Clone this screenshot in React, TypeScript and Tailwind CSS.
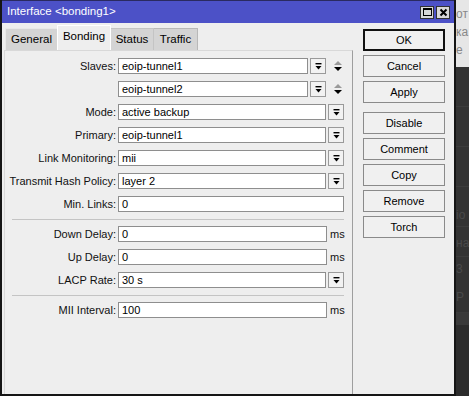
import React from "react";

const font = { fontFamily: '"Liberation Sans", Arial, sans-serif' };

function DropIcon() {
  return (
    <svg width="9" height="9" viewBox="0 0 9 9">
      <rect x="1.5" y="1" width="6" height="1.4" fill="#000" />
      <polygon points="1.5,4 7.5,4 4.5,7.5" fill="#000" />
    </svg>
  );
}

function DropBtn() {
  return (
    <div className="w-[16px] h-[16px] border border-[#9a9a9a] bg-[#f2f2f2] flex items-center justify-center shrink-0">
      <DropIcon />
    </div>
  );
}

function UpDown() {
  return (
    <svg width="10" height="12" viewBox="0 0 10 12" className="shrink-0">
      <polygon points="1,5 9,5 5,1" fill="#9a9a9a" />
      <polygon points="1,7 9,7 5,11" fill="#000" />
    </svg>
  );
}

function Input({ value, w }: { value: string; w: string }) {
  return (
    <div
      className={`${w} h-[16px] border border-[#8e8e8e] bg-white text-[11px] leading-[14px] pl-[3px] text-black whitespace-nowrap overflow-hidden shrink-0`}
    >
      {value}
    </div>
  );
}

function Row({ label, children }: { label: string; children: React.ReactNode }) {
  return (
    <div className="flex items-center h-[16px] mb-[7px]">
      <div className="w-[111px] text-right text-[11px] text-[#111] whitespace-nowrap">{label}</div>
      <div className="flex items-center ml-[2px]">{children}</div>
    </div>
  );
}

function Btn({ label, primary, extra }: { label: string; primary?: boolean; extra?: string }) {
  return (
    <div
      className={`w-[82px] h-[22px] flex items-center justify-center bg-[#f0f0f0] text-[11px] text-black ${
        primary ? "border-[2px] border-[#111]" : "border border-[#8a8a8a]"
      } ${extra ?? ""}`}
    >
      {label}
    </div>
  );
}

export default function App() {
  return (
    <div className="w-[469px] h-[396px] flex overflow-hidden bg-[#2f2f2f]" style={font}>
      {/* Window */}
      <div className="w-[456px] h-[396px] flex flex-col border-l-2 border-r-2 border-b-2 border-[#151515] bg-[#eeeeee] shrink-0">
        {/* Title bar */}
        <div className="h-[23px] bg-[#4c51c7] border-t border-[#2a2a60] flex items-center justify-between pl-[5px] pr-[4px] shrink-0">
          <span className="text-white text-[11.5px]">Interface &lt;bonding1&gt;</span>
          <div className="flex gap-[2px]">
            <div className="w-[14px] h-[13px] bg-[#d8d8d8] border border-[#333] flex items-center justify-center">
              <div className="w-[9px] h-[8px] border border-black border-t-2"></div>
            </div>
            <div className="w-[14px] h-[13px] bg-[#d8d8d8] border border-[#333] flex items-center justify-center">
              <svg width="9" height="9" viewBox="0 0 9 9">
                <path d="M1.5 1.5 L7.5 7.5 M7.5 1.5 L1.5 7.5" stroke="#000" strokeWidth="2" />
              </svg>
            </div>
          </div>
        </div>
        {/* Body */}
        <div className="flex flex-1 min-h-0">
          {/* Left column */}
          <div className="w-[351px] flex flex-col shrink-0">
            {/* Tabs */}
            <div className="h-[27px] flex items-end pl-[3px] shrink-0">
              <div className="w-[52px] h-[22px] bg-[#d4d4d4] border-l border-t border-[#e8e8e8] flex items-center justify-center text-[11.5px] text-black">
                General
              </div>
              <div className="w-[54px] h-[25px] bg-[#eeeeee] border-l border-t border-r border-[#ffffff] flex items-center justify-center text-[11.5px] text-black pb-[3px]">
                Bonding
              </div>
              <div className="w-[43px] h-[22px] bg-[#d4d4d4] border-t border-r border-[#c4c4c4] flex items-center justify-center text-[11.5px] text-black">
                Status
              </div>
              <div className="w-[44px] h-[22px] bg-[#d4d4d4] border-t border-r border-[#b8b8b8] flex items-center justify-center text-[11.5px] text-black">
                Traffic
              </div>
            </div>
            {/* Panel */}
            <div className="ml-[2px] flex-1 border-l border-t border-[#d8d8d8] border-r-[#9e9e9e] border-r pt-[7px]">
              <Row label="Slaves:">
                <Input value="eoip-tunnel1" w="w-[190px]" />
                <div className="ml-[2px]"><DropBtn /></div>
                <div className="ml-[7px]"><UpDown /></div>
              </Row>
              <Row label="">
                <Input value="eoip-tunnel2" w="w-[190px]" />
                <div className="ml-[2px]"><DropBtn /></div>
                <div className="ml-[7px]"><UpDown /></div>
              </Row>
              <Row label="Mode:">
                <Input value="active backup" w="w-[208px]" />
                <div className="ml-[2px]"><DropBtn /></div>
              </Row>
              <Row label="Primary:">
                <Input value="eoip-tunnel1" w="w-[208px]" />
                <div className="ml-[2px]"><DropBtn /></div>
              </Row>
              <Row label="Link Monitoring:">
                <Input value="mii" w="w-[208px]" />
                <div className="ml-[2px]"><DropBtn /></div>
              </Row>
              <Row label="Transmit Hash Policy:">
                <Input value="layer 2" w="w-[208px]" />
                <div className="ml-[2px]"><DropBtn /></div>
              </Row>
              <Row label="Min. Links:">
                <Input value="0" w="w-[226px]" />
              </Row>
              <div className="ml-[7px] w-[332px] h-[1px] bg-[#c4c4c4] mt-[7px] mb-[6px]"></div>
              <Row label="Down Delay:">
                <Input value="0" w="w-[209px]" />
                <span className="ml-[3px] text-[11px] text-[#111]">ms</span>
              </Row>
              <Row label="Up Delay:">
                <Input value="0" w="w-[209px]" />
                <span className="ml-[3px] text-[11px] text-[#111]">ms</span>
              </Row>
              <Row label="LACP Rate:">
                <Input value="30 s" w="w-[208px]" />
                <div className="ml-[2px]"><DropBtn /></div>
              </Row>
              <div className="ml-[7px] w-[332px] h-[1px] bg-[#c4c4c4] mt-[1px] mb-[6px]"></div>
              <Row label="MII Interval:">
                <Input value="100" w="w-[209px]" />
                <span className="ml-[3px] text-[11px] text-[#111]">ms</span>
              </Row>
            </div>
          </div>
          {/* Buttons */}
          <div className="flex flex-col gap-[4px] pl-[10px] pt-[6px]">
            <Btn label="OK" primary />
            <Btn label="Cancel" />
            <Btn label="Apply" />
            <Btn label="Disable" extra="mt-[5px]" />
            <Btn label="Comment" />
            <Btn label="Copy" />
            <Btn label="Remove" />
            <Btn label="Torch" />
          </div>
        </div>
      </div>
      {/* Background window strip */}
      <div className="flex-1 flex flex-col overflow-hidden text-[12px] leading-[16px] whitespace-nowrap">
        <div className="h-[67px] bg-[#e6e6e6] text-[#888] pt-[6px] flex flex-col gap-[2px]">
          <span>от</span>
          <span>ка</span>
          <span>е</span>
        </div>
        <div className="flex-1 bg-[#333333] text-[#4a4a4a] flex flex-col">
          <div className="h-[40px] border-b border-[#3c3c3c]"></div>
          <div className="h-[40px] border-b border-[#3c3c3c]"></div>
          <div className="h-[40px] border-b border-[#3c3c3c]"></div>
          <div className="h-[40px] border-b border-[#3c3c3c] pt-[20px]">io</div>
          <div className="h-[30px] border-b border-[#3c3c3c] pt-[8px]">на</div>
          <div className="h-[26px] pt-[4px]">3</div>
          <div className="h-[30px] border-b border-[#3c3c3c] pt-[6px]">P</div>
          <div className="h-[12px] bg-[#3a3a3a]"></div>
          <div className="flex-1 bg-[#2c2c2c]"></div>
        </div>
      </div>
    </div>
  );
}
